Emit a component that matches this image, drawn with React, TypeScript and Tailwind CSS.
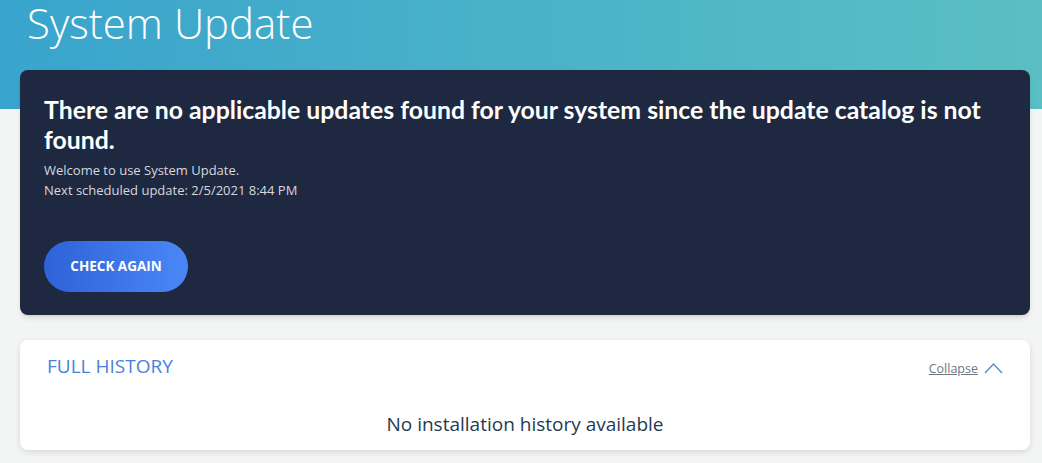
import React from "react";

export default function App() {
  return (
    <div className="min-h-screen bg-[#f3f4f4] font-['Open_Sans',sans-serif]">
      <div className="h-[109px] bg-gradient-to-r from-[#39a4cd] to-[#5abfc3] pl-[27px]">
        <h1 className="text-[42px] leading-[46px] font-light text-white">System Update</h1>
      </div>
      <div className="-mt-[39px] pl-5 pr-3 pb-4">
        <div className="rounded-lg bg-[#1f2841] px-6 pt-[25px] pb-[23px] shadow-md">
          <h2 className="font-['Lato',sans-serif] text-[24.8px] font-bold leading-[30px] text-white">
            There are no applicable updates found for your system since the update catalog is not found.
          </h2>
          <div className="mt-[5px] text-[13px] leading-[20px] text-[#d5d8df]">
            <p>Welcome to use System Update.</p>
            <p>Next scheduled update: 2/5/2021 8:44 PM</p>
          </div>
          <button className="mt-[41px] h-[51px] w-[144px] rounded-full bg-gradient-to-r from-[#2f62d8] to-[#4a87f6] text-[13.5px] font-bold text-white">
            CHECK AGAIN
          </button>
        </div>
        <div className="mt-[25px] h-[110px] rounded-lg bg-white shadow-[0_2px_6px_rgba(0,0,0,0.12)]">
          <div className="flex items-start justify-between px-[27px] pt-[13px]">
            <span className="text-[19px] leading-[26px] text-[#4a7fdd]">FULL HISTORY</span>
            <div className="flex items-center gap-[6px] pt-[7px]">
              <span className="text-[12.5px] leading-[18px] text-[#6f7782] underline">Collapse</span>
              <svg width="19" height="12" viewBox="0 0 19 12" fill="none" className="-mt-[3px]">
                <path d="M1 11 L9.5 2 L18 11" stroke="#5b84d6" strokeWidth="1.3" />
              </svg>
            </div>
          </div>
          <p className="mt-[32px] text-center text-[19px] leading-[26px] text-[#1f3b4f]">
            No installation history available
          </p>
        </div>
      </div>
    </div>
  );
}
